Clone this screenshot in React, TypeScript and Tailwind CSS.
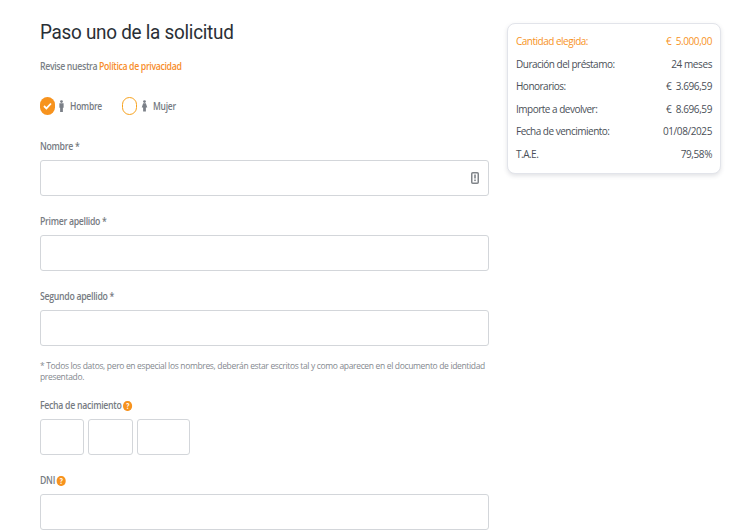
function Person({ skirt }: { skirt?: boolean }) {
  return (
    <svg width="7" height="12" viewBox="0 0 7 13" className="fill-[#7b8088]">
      <circle cx="3.5" cy="1.7" r="1.5" />
      {skirt ? (
        <path d="M2 3.6h3l.5 1.6 1 3H5v4.300H2V8.200H.5l1-3z" />
      ) : (
        <path d="M1.200 3.600h4.600v4.800H5V13H2V8.400h-.8z" />
      )}
    </svg>
  );
}

function Help() {
  return (
    <span className="flex h-[10px] w-[11px] items-center justify-center rounded-full bg-[#f7931e] text-[8px] font-bold leading-none text-white">
      ?
    </span>
  );
}

function Label({ text, help }: { text: string; help?: boolean }) {
  return (
    <div className="mb-[5px] flex h-[18px] origin-left scale-x-[0.83] items-center gap-[2px] pt-[2px] text-[10.500px] font-semibold tracking-[-0.35px] whitespace-pre text-[#767b82]">
      {text}
      {help && <Help />}
    </div>
  );
}

function Field({ label, last }: { label: string; last?: boolean }) {
  return (
    <div className={last ? "" : "mb-4"}>
      <Label text={label} />
      <div className="h-9 rounded-[3px] border border-[#d3d6da] bg-white" />
    </div>
  );
}

const rows = [
  ["Duración del préstamo:", "24 meses"],
  ["Honorarios:", "€  3.696,59"],
  ["Importe a devolver:", "€  8.696,59"],
  ["Fecha de vencimiento:", "01/08/2025"],
  ["T.A.E.", "79,58%"],
];

export default function App() {
  return (
    <div className="flex h-[531px] w-[748px] items-start gap-[18px] overflow-hidden bg-white pl-10 font-['Open_Sans',sans-serif]">
      <main className="w-[449px] shrink-0">
        <h1 className="mt-[18px] h-[28px] origin-left scale-x-[0.9] font-['Roboto',sans-serif] text-[21px] font-normal leading-[28px] tracking-[-0.3px] text-[#2a2f36]">
          Paso uno de la solicitud
        </h1>
        <p className="mt-[13px] h-[14px] origin-left scale-x-[0.875] text-[10px] font-semibold leading-[14px] tracking-[-0.4px] text-[#7a7f86]">
          Revise nuestra <span className="text-[#f78d2a]">Política de privacidad</span>
        </p>
        <div className="mt-[23px] flex h-[20px] items-center text-[10px] font-semibold text-[#757a82]">
          <span className="flex h-[18px] w-[15px] items-center justify-center rounded-full bg-[#f7931e]">
            <svg width="9" height="8" viewBox="0 0 9 8" fill="none" stroke="white" strokeWidth="1.800">
              <path d="M1 4l2.400 2.400L8 1.500" />
            </svg>
          </span>
          <span className="ml-[2px] flex w-[9px] justify-center"><Person /></span>
          <span className="ml-[4px] w-[52px] origin-left scale-x-[0.85] tracking-[-0.3px]">Hombre</span>
          <span className="h-[18px] w-[15px] rounded-full border border-[#f7a21e]" />
          <span className="ml-[3px] flex w-[9px] justify-center"><Person skirt /></span>
          <span className="ml-[4px] origin-left scale-x-[0.85] tracking-[-0.3px]">Mujer</span>
        </div>
        <div className="mt-[21px]">
          <div className="mb-4">
            <Label text="Nombre *" />
            <div className="flex h-9 items-center justify-end rounded-[3px] border border-[#d3d6da] bg-white pr-[9px]">
              <svg width="8" height="12" viewBox="0 0 8 12">
                <rect x="0.750" y="0.750" width="6.500" height="10.500" rx="1" fill="none" stroke="#808489" strokeWidth="1.500" />
                <rect x="3.200" y="2.500" width="1.600" height="4" fill="#808489" />
                <rect x="3.200" y="7.500" width="1.600" height="1.600" fill="#808489" />
              </svg>
            </div>
          </div>
          <Field label="Primer apellido *" />
          <Field label="Segundo apellido *" last />
        </div>
        <p className="mt-[14px] text-[8.500px] leading-[11px] tracking-[-0.34px] text-[#85898f]">
          * Todos los datos, pero en especial los nombres, deberán estar escritos tal y como aparecen en el documento de identidad presentado.
        </p>
        <div className="mt-[14px]">
          <Label text="Fecha de nacimiento" help />
        </div>
        <div className="flex gap-1">
          <div className="h-9 w-11 rounded-[3px] border border-[#d3d6da]" />
          <div className="h-9 w-[45px] rounded-[3px] border border-[#d3d6da]" />
          <div className="h-9 w-[53px] rounded-[3px] border border-[#d3d6da]" />
        </div>
        <div className="mt-4">
          <Label text="DNI" help />
        </div>
        <div className="h-9 rounded-[3px] border border-[#d3d6da] bg-white" />
      </main>
      <aside className="mt-[23px] h-[151px] w-[214px] shrink-0 rounded-lg border border-[#e2e4ea] bg-white px-2 pt-[6.500px] text-[10px] tracking-[-0.5px] text-[#4a4f57] shadow-[0_2px_4px_rgba(60,65,90,0.15)]">
        <div className="flex h-[22.500px] items-center justify-between text-[#f7931e]">
          <span>Cantidad elegida:</span>
          <span className="whitespace-pre tracking-[-0.4px]">€  5.000,00</span>
        </div>
        {rows.map(([k, v]) => (
          <div key={k} className="flex h-[22.500px] items-center justify-between">
            <span>{k}</span>
            <span className="whitespace-pre tracking-[-0.4px]">{v}</span>
          </div>
        ))}
      </aside>
    </div>
  );
}
